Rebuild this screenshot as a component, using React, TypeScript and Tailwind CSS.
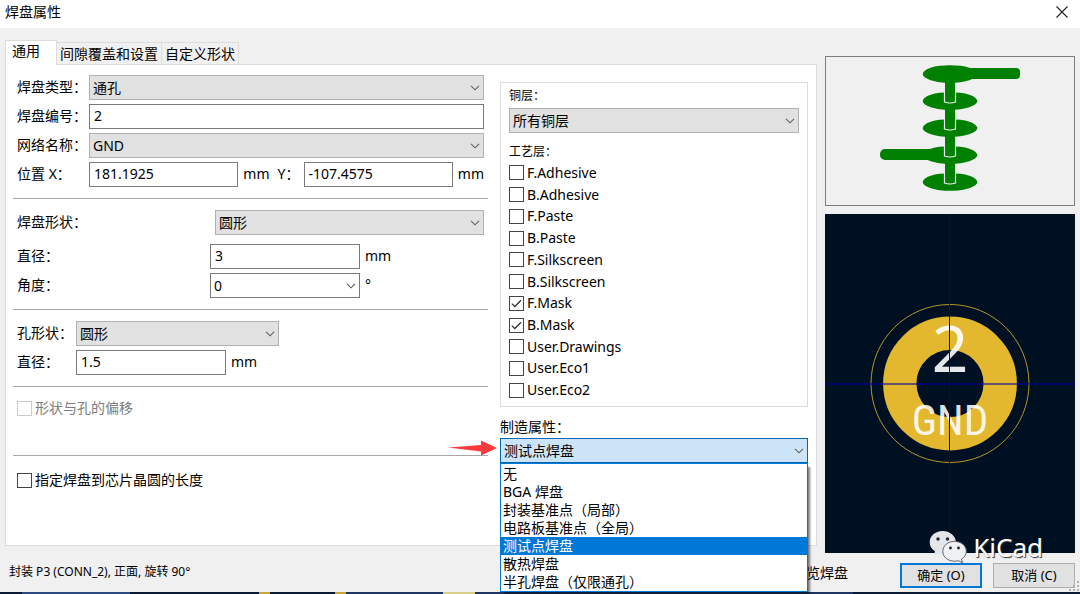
import { useState, type ReactNode } from "react";
import { clsx } from "clsx";

const layers = [
  "F.Adhesive",
  "B.Adhesive",
  "F.Paste",
  "B.Paste",
  "F.Silkscreen",
  "B.Silkscreen",
  "F.Mask",
  "B.Mask",
  "User.Drawings",
  "User.Eco1",
  "User.Eco2",
];

const fabProperties = [
  "无",
  "BGA 焊盘",
  "封装基准点（局部）",
  "电路板基准点（全局）",
  "测试点焊盘",
  "散热焊盘",
  "半孔焊盘（仅限通孔）",
];

const tabs = ["通用", "间隙覆盖和设置", "自定义形状"];

function Chevron() {
  return (
    <svg
      viewBox="0 0 10 6"
      className="pointer-events-none absolute top-1/2 right-1 h-[6px] w-[10px] -translate-y-1/2"
      fill="none"
      stroke="#5f5f5f"
      strokeWidth="1.1"
    >
      <path d="M1 0.8 5 4.8 9 0.8" />
    </svg>
  );
}

type SelectBoxProps = {
  id: string;
  options: string[];
  value?: string;
  onChange?: (value: string) => void;
  variant?: "flat" | "edit" | "active";
  className?: string;
};

function SelectBox({ id, options, value, onChange, variant = "flat", className }: SelectBoxProps) {
  const [inner, setInner] = useState(options[0]);
  return (
    <div className={clsx("relative", className)}>
      <select
        id={id}
        value={value ?? inner}
        onChange={(e) => {
          setInner(e.target.value);
          onChange?.(e.target.value);
        }}
        className={clsx(
          "block h-[25px] w-full appearance-none border pr-5 pl-[3px] text-sm outline-none",
          variant === "flat" && "border-[#b0b0b0] bg-[#e1e1e1]",
          variant === "edit" && "border-[#7a7a7a] bg-white",
          variant === "active" && "border-[#0067b5] bg-[#cce4f7]"
        )}
      >
        {options.map((o) => (
          <option key={o}>{o}</option>
        ))}
      </select>
      <Chevron />
    </div>
  );
}

function TextBox({ id, value, className }: { id: string; value: string; className?: string }) {
  return (
    <input
      id={id}
      type="text"
      defaultValue={value}
      className={clsx(
        "block h-[25px] min-w-0 border border-[#7a7a7a] bg-white px-1 pb-[2px] text-sm outline-none",
        className
      )}
    />
  );
}

function CheckBox({
  label,
  checked = false,
  disabled = false,
}: {
  label: string;
  checked?: boolean;
  disabled?: boolean;
}) {
  return (
    <label className={clsx("flex items-center gap-[3px]", disabled && "text-[#7d7d7d]")}>
      <span className="relative size-[15px] shrink-0">
        <input
          type="checkbox"
          defaultChecked={checked}
          disabled={disabled}
          className="peer block size-[15px] appearance-none border border-[#444] bg-white disabled:border-[#cccccc]"
        />
        <svg
          viewBox="0 0 15 15"
          className="pointer-events-none absolute inset-0 hidden size-[15px] peer-checked:block"
          fill="none"
          stroke="#333"
          strokeWidth="1.3"
        >
          <path d="M2.8 7.6 5.8 10.5 12 4.2" />
        </svg>
      </span>
      {label}
    </label>
  );
}

function Row({
  id,
  label,
  labelClass,
  children,
}: {
  id: string;
  label: string;
  labelClass: string;
  children: ReactNode;
}) {
  return (
    <div className="flex items-center">
      <label htmlFor={id} className={clsx("shrink-0 pb-[2px] whitespace-nowrap", labelClass)}>
        {label}
      </label>
      {children}
    </div>
  );
}

function Unit({ children }: { children: ReactNode }) {
  return <span className="shrink-0 pb-[2px] pl-[5px]">{children}</span>;
}

function PadForm() {
  return (
    <div className="flex min-w-0 flex-1 flex-col">
      <div className="flex flex-col gap-1 border-b border-[#a8a8a8] pr-1 pb-[11px] pl-1">
        <Row id="pad-type" label="焊盘类型：" labelClass="w-[72px]">
          <SelectBox id="pad-type" options={["通孔"]} className="flex-1" />
        </Row>
        <Row id="pad-number" label="焊盘编号：" labelClass="w-[72px]">
          <TextBox id="pad-number" value="2" className="flex-1" />
        </Row>
        <Row id="net-name" label="网络名称：" labelClass="w-[72px]">
          <SelectBox id="net-name" options={["GND"]} className="flex-1" />
        </Row>
        <Row id="pos-x" label="位置 X：" labelClass="w-[72px]">
          <TextBox id="pos-x" value="181.1925" className="flex-1" />
          <Unit>mm</Unit>
          <label htmlFor="pos-y" className="w-[34px] shrink-0 pb-[2px] pl-2 whitespace-nowrap">
            Y：
          </label>
          <TextBox id="pos-y" value="-107.4575" className="flex-1" />
          <Unit>mm</Unit>
        </Row>
      </div>

      <div className="flex flex-col gap-1 border-b border-[#a8a8a8] pt-[11px] pr-1 pb-[11px] pl-1">
        <div className="mb-[5px]">
          <Row id="pad-shape" label="焊盘形状：" labelClass="w-[198px]">
            <SelectBox id="pad-shape" options={["圆形"]} className="flex-1" />
          </Row>
        </div>
        <Row id="pad-diameter" label="直径：" labelClass="w-[193px]">
          <TextBox id="pad-diameter" value="3" className="w-[150px]" />
          <Unit>mm</Unit>
        </Row>
        <Row id="pad-angle" label="角度：" labelClass="w-[193px]">
          <SelectBox id="pad-angle" options={["0"]} variant="edit" className="w-[150px]" />
          <Unit>°</Unit>
        </Row>
      </div>

      <div className="flex flex-col gap-1 border-b border-[#a8a8a8] pt-[11px] pr-1 pb-[11px] pl-1">
        <Row id="hole-shape" label="孔形状：" labelClass="w-[59px]">
          <SelectBox id="hole-shape" options={["圆形"]} className="w-[203px]" />
        </Row>
        <Row id="hole-diameter" label="直径：" labelClass="w-[59px]">
          <TextBox id="hole-diameter" value="1.5" className="w-[150px]" />
          <Unit>mm</Unit>
        </Row>
      </div>

      <div className="h-[69px] border-b border-[#a8a8a8] pt-[11px] pl-1">
        <CheckBox label="形状与孔的偏移" disabled />
      </div>
      <div className="pt-[14px] pl-1">
        <CheckBox label="指定焊盘到芯片晶圆的长度" />
      </div>
    </div>
  );
}

function FabProperty() {
  const [value, setValue] = useState("测试点焊盘");
  return (
    <div className="mt-[10px]">
      <label htmlFor="fab-property" className="block leading-5">
        制造属性：
      </label>
      <div className="relative mt-px">
        <svg
          viewBox="0 0 49 16"
          className="absolute top-[2px] -left-[52px] h-4 w-[49px]"
          fill="#fb3b3b"
        >
          <path d="M0 7.5 33 5 33 .5 49 8 33 15.500 33 11.500Z" />
        </svg>
        <SelectBox
          id="fab-property"
          options={fabProperties}
          value={value}
          onChange={setValue}
          variant="active"
        />
        <ul
          role="listbox"
          aria-label="制造属性"
          className="absolute top-full right-0 left-0 z-10 border border-[#0078d7] bg-white pt-px shadow-[3px_3px_2px_-1px_rgba(0,0,0,0.5)]"
        >
          {fabProperties.map((p) => (
            <li
              key={p}
              role="option"
              aria-selected={p === value}
              onClick={() => setValue(p)}
              className={clsx(
                "h-[18px] px-[2px] leading-[18px]",
                p === value && "bg-[#0078d7] text-white"
              )}
            >
              {p}
            </li>
          ))}
        </ul>
      </div>
    </div>
  );
}

function LayerPanel() {
  return (
    <div className="w-[308px] shrink-0 pt-[7px]">
      <div className="border border-[#dcdcdc] px-2 pt-[3px] pb-[5px]">
        <label htmlFor="copper" className="block text-xs leading-5">
          铜层：
        </label>
        <SelectBox id="copper" options={["所有铜层"]} className="mt-[2px]" />
        <div className="mt-[9px] text-xs leading-5">工艺层：</div>
        <div className="flex h-[239px] flex-col">
          {layers.map((name) => (
            <div key={name} className="flex flex-1 items-center">
              <CheckBox label={name} checked={name.endsWith(".Mask")} />
            </div>
          ))}
        </div>
      </div>
      <FabProperty />
    </div>
  );
}

// Side view of the layer stack with the tracks leaving it
function StackView() {
  return (
    <svg viewBox="0 0 248 148" className="block h-auto w-full" fill="#008000">
      <rect x="124" y="11" width="70" height="11" rx="4" />
      <rect x="54" y="92" width="70" height="11" rx="5" />
      {[17, 44, 71, 98, 125].map((y) => (
        <ellipse key={y} cx="124" cy={y} rx="27.3" ry="8.8" />
      ))}
      {[17, 44, 71, 98].map((y) => (
        <g key={y}>
          <path
            d={`M118.500 ${y + 18}V${y + 28}Q124 ${y + 30} 129.500 ${y + 28}V${y + 18}`}
            fill="#008000"
            stroke="#f0f0f0"
            strokeWidth="1.2"
          />
          <rect x="119" y={y + 7} width="10" height="15" />
        </g>
      ))}
    </svg>
  );
}

function PadView() {
  return (
    <svg viewBox="0 0 250 339" className="block h-auto w-full bg-[#001023]">
      <circle cx="125" cy="169.5" r="79" fill="none" stroke="#b8952a" strokeWidth="1" />
      <circle cx="125" cy="169.5" r="50.2" fill="none" stroke="#e3b72e" strokeWidth="33.4" />
      <g fill="#ffffff" fillOpacity="0.9" textAnchor="middle">
        <text x="125" y="158" fontSize="64" fontFamily="'Noto Sans', sans-serif">
          2
        </text>
        <text x="125" y="221" fontSize="43" fontFamily="'Roboto Condensed', Roboto, sans-serif">
          GND
        </text>
      </g>
      <path d="M124.5 0V339" stroke="#0000a0" strokeWidth="1" />
      <path d="M0 170H250" stroke="#0000a0" strokeOpacity="0.75" strokeWidth="1.4" />
    </svg>
  );
}

function Watermark() {
  return (
    <div className="pointer-events-none absolute right-8 -bottom-[11px] flex items-center gap-2">
      <svg viewBox="0 0 38 34" className="h-[34px] w-[38px] translate-x-[2px]">
        <path
          d="M13.5 1C6.2 1 .7 6 .7 12.2c0 3.8 2 7 5.3 9.1L4.5 26l5.2-2.7c1.4.4 2.6.5 4.3.5 7.2 0 12.9-5.1 12.9-11.5S20.9 1 13.5 1Z"
          fill="#e4e6ea"
        />
        <path
          d="M25.5 11.4c-6.6 0-11.7 4.3-11.7 9.9s5.1 9.9 11.7 9.9c1.4 0 2.6-.2 3.9-.5l4.2 2.2-1.1-3.7c3-1.9 4.8-4.7 4.8-7.9 0-5.6-5.2-9.9-11.8-9.9Z"
          fill="#eef0f2"
          stroke="#5d6470"
          strokeWidth="1"
        />
        <circle cx="9" cy="9" r="1.7" fill="#1a2433" />
        <circle cx="18.5" cy="9" r="1.7" fill="#1a2433" />
        <circle cx="21.5" cy="18" r="1.4" fill="#1a2433" />
        <circle cx="29.5" cy="18" r="1.4" fill="#1a2433" />
      </svg>
      <span className="text-[26px] leading-8 text-white [text-shadow:1px_1px_1px_#333]">KiCad</span>
    </div>
  );
}

export default function App() {
  const [tab, setTab] = useState(tabs[0]);

  return (
    <div className="flex min-h-screen flex-col bg-[#f0f0f0] font-['Noto_Sans','Noto_Sans_CJK_SC',sans-serif] text-sm leading-5 text-black">
      <header className="flex h-7 items-center justify-between bg-white pr-3 pl-[5px]">
        <h1 className="pb-1">焊盘属性</h1>
        <button type="button" aria-label="关闭" className="pb-1">
          <svg viewBox="0 0 12 12" className="size-3" stroke="#222" strokeWidth="1.1">
            <path d="M.5 .5 11.5 11.5M11.5 .5 .5 11.5" />
          </svg>
        </button>
      </header>

      <main className="flex flex-1 gap-2 pt-3 pr-[5px] pl-[5px]">
        <div className="mb-2 flex min-w-0 flex-1 flex-col">
          <div role="tablist" className="flex h-6 items-end">
            {tabs.map((t) => (
              <button
                key={t}
                type="button"
                role="tab"
                aria-selected={t === tab}
                onClick={() => setTab(t)}
                className={clsx(
                  "border border-b-0 border-[#dcdcdc] whitespace-nowrap",
                  t === tab
                    ? "relative -mb-px h-[25px] bg-white pr-4 pb-1 pl-[6px]"
                    : "-ml-px h-[22px] bg-[#f0f0f0] px-[3px]"
                )}
              >
                {t}
              </button>
            ))}
          </div>
          <div className="flex flex-1 gap-3 border border-[#dcdcdc] bg-white pt-[10px] pr-2 pl-[7px]">
            <PadForm />
            <LayerPanel />
          </div>
        </div>

        <aside className="flex w-[250px] shrink-0 flex-col gap-2 pt-4">
          <div className="border border-[#7d7d7d]">
            <StackView />
          </div>
          <div className="relative">
            <PadView />
            <Watermark />
          </div>
        </aside>
      </main>

      <footer className="flex h-[38px] shrink-0 items-center pr-[5px] pl-[9px]">
        <p className="flex-1 pb-[3px] text-xs">封装 P3 (CONN_2), 正面, 旋转 90°</p>
        <p className="mr-[52px]">览焊盘</p>
        <div className="relative mt-1 flex gap-[11px] text-[13px]">
          <button type="button" className="h-[25px] w-[82px] border-2 border-[#0078d7] bg-[#e1e1e1] leading-5">
            确定 (O)
          </button>
          <button type="button" className="h-[25px] w-[82px] border border-[#adadad] bg-[#e1e1e1] leading-5">
            取消 (C)
          </button>
          <svg viewBox="0 0 10 10" className="absolute -right-1 -bottom-[3px] size-[10px]" fill="#b0b0b0">
            <path d="M8 0h2v2H8zM4 4h2v2H4zM8 4h2v2H8zM0 8h2v2H0zM4 8h2v2H4zM8 8h2v2H8z" />
          </svg>
        </div>
      </footer>
      <div className="h-[2px] shrink-0 bg-[linear-gradient(90deg,#0b1a33_0_2%,#2c4a80_2%_12%,#0b1a33_12%_24%,#c9a63a_24%_25%,#0b1a33_25%_31%,#c9a63a_31%_32%,#1d3560_32%_41%,#d8cf8a_41%_44%,#1d3560_44%_79%,#0b1a33_79%)]" />
    </div>
  );
}
